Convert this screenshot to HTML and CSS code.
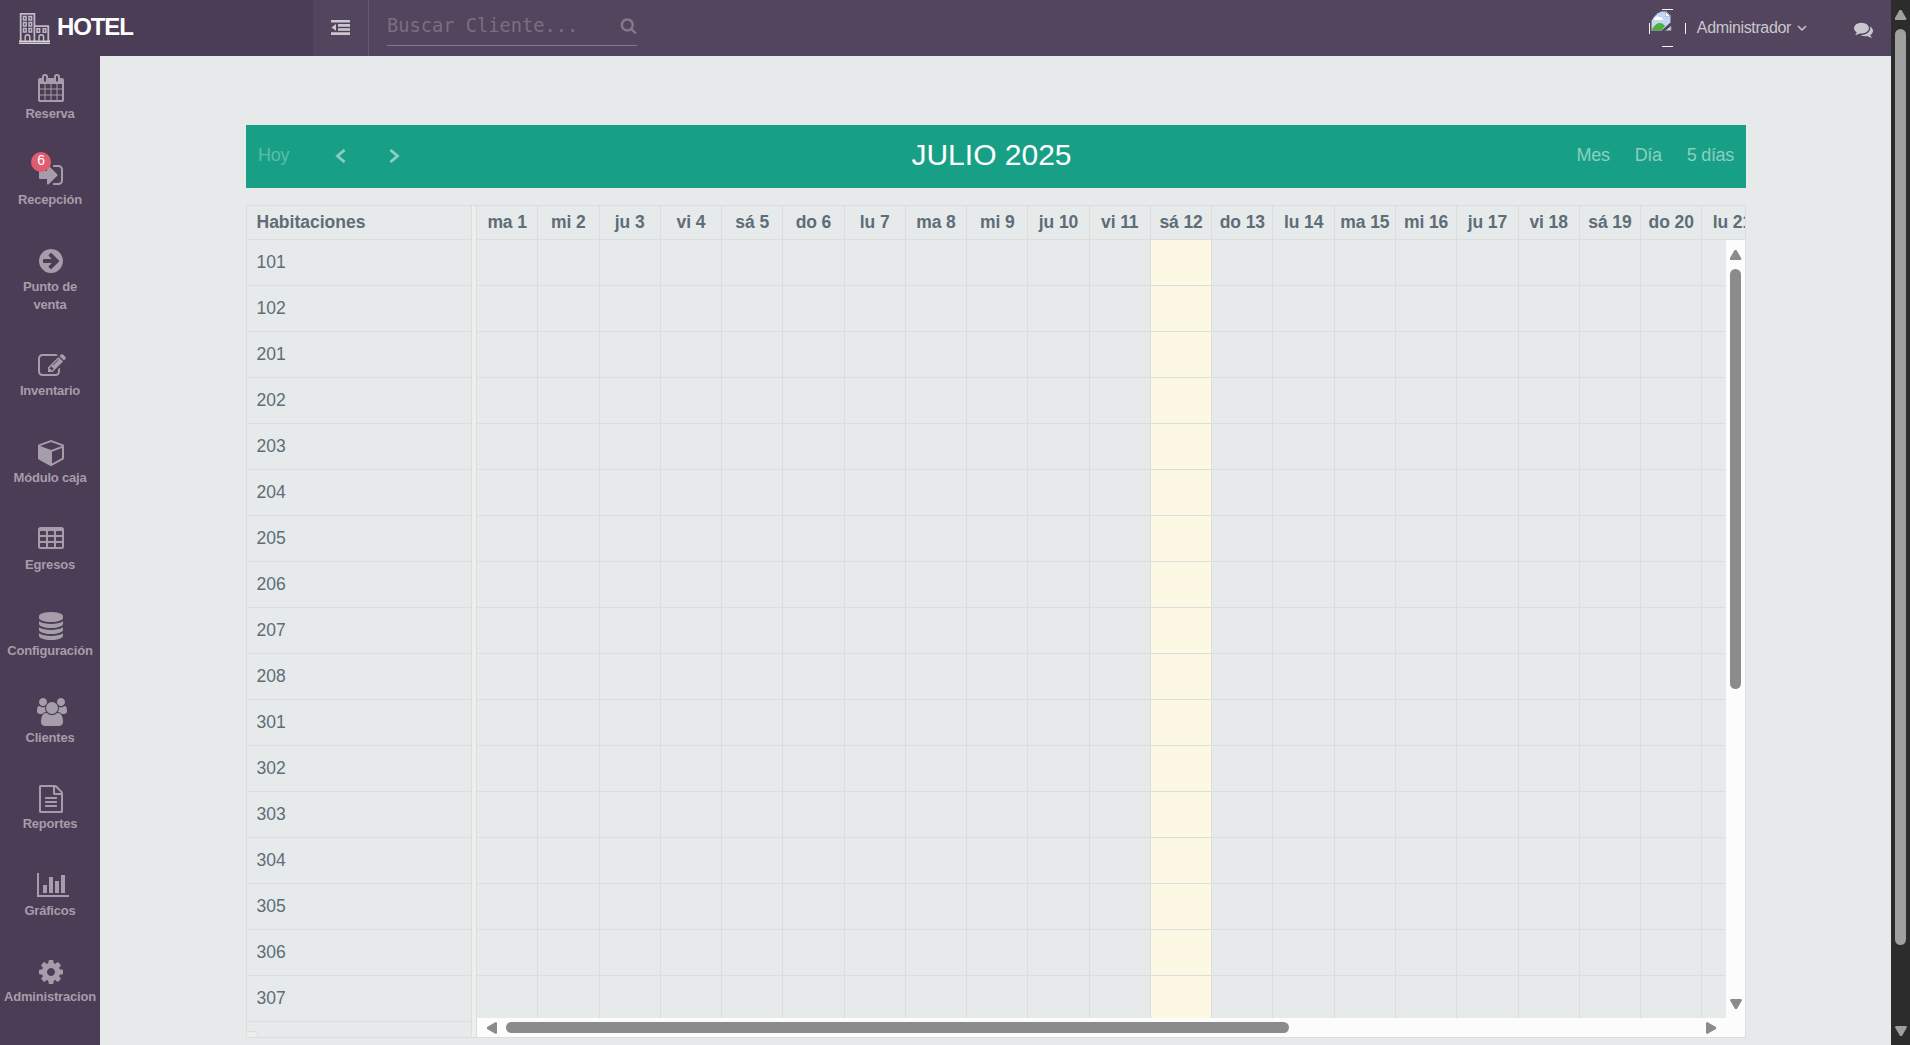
FILE: index.html
```html
<!DOCTYPE html>
<html lang="es">
<head>
<meta charset="utf-8">
<title>Hotel</title>
<link rel="stylesheet" href="styles.css">
</head>
<body>
<header class="topbar">
  <div class="brand">
    <svg class="brand-icon" viewBox="0 0 31 31" fill="none" stroke="#bfb9c6" stroke-width="1.500">
      <path d="M1.700 28V.8H15.400V28M15.400 13.200H29.300V28" stroke-width="1.800"/>
      <path d="M0 28.200H31M0 30.200H31" stroke-width="1.500" stroke="#d8d4dc"/>
      <path d="M4.500 3.500h2.600v3.400H4.500zM10 3.500h2.600v3.400H10zM4.500 9.500h2.600v3.400H4.500zM10 9.500h2.600v3.400H10zM4.500 15.500h2.600v3.400H4.500zM10 15.500h2.600v3.400H10zM18 15.800h2.600v3.400H18zM24.200 15.800h2.600v3.400H24.200zM6.200 28v-4a2.300 2.300 0 0 1 4.600 0v4M20 28v-4a2.300 2.300 0 0 1 4.600 0v4"/>
    </svg>
    <span>HOTEL</span>
  </div>
  <button class="toggle" aria-label="Menu">
    <svg viewBox="0 0 19 15" fill="currentColor"><path d="M0 0h19v2.600H0zM7 4.100h12v2.600H7zM7 8.200h12v2.600H7zM0 12.300h19v2.600H0zM5 3.900v6.900L.4 7.400z"/></svg>
  </button>
  <div class="search">
    <input type="text" placeholder="Buscar Cliente...">
    <svg viewBox="0 0 1792 1792" fill="currentColor"><path d="M1216 832q0-185-131.500-316.500t-316.500-131.500-316.500 131.500-131.500 316.500 131.500 316.500 316.500 131.500 316.500-131.500 131.500-316.500zm512 832q0 52-38 90t-90 38q-54 0-90-38l-343-342q-179 124-399 124-143 0-273.500-55.500t-225-150-150-225-55.500-273.500 55.500-273.500 150-225 225-150 273.500-55.500 273.500 55.500 225 150 150 225 55.500 273.500q0 220-124 399l343 343q37 37 37 90z"/></svg>
  </div>
  <div class="user">
    <svg class="avatar" viewBox="0 0 38 38">
      <defs><clipPath id="round"><circle cx="18.500" cy="19" r="17.500"/></clipPath></defs>
      <g clip-path="url(#round)">
        <path d="M2 2h15l5 5v15H2z" fill="#c3d6f6"/>
        <path d="M5 10q2-4 5-2 4 0 4 3H5z" fill="#fff"/>
        <path d="M2 22q5-9 9-8 3 0 5 3l-4 5z" fill="#4fb035"/>
        <path d="M12 22 22 13v4l-6 5z" fill="#52455d"/>
        <path d="M2.500 22V2.500h14l5 5V14M16.500 2.500v5h5M2 21.500h11M17 21.500h5v-4" fill="none" stroke="#8b8b90"/>
        <path d="M16.500 3v4.500H21z" fill="#fff"/>
      </g>
      <path d="M13 .5h11M13 37.500h11M.5 14v11M36.500 14v11" stroke="#f4f3f5" fill="none"/>
    </svg>
    <span>Administrador</span>
    <svg class="caret" viewBox="0 0 10 7" fill="none" stroke="currentColor" stroke-width="1.500"><path d="M1 1l4 4 4-4"/></svg>
  </div>
  <svg class="chat" viewBox="0 0 1792 1792" fill="currentColor"><path d="M1408 768q0 139-94 257t-256.500 186.500-353.500 68.500q-86 0-176-16-124 88-278 128-36 9-86 16h-3q-11 0-20.500-8t-11.500-21q-1-3-1-6.500t.5-6.500 2-6l2.500-5 3.500-5.500 4-5 4.500-5 4-4.500q5-6 23-25t26-29.500 22.500-29 25-38.500 20.500-44q-124-72-195-177t-71-224q0-139 94-257t256.500-186.500 353.500-68.500 353.500 68.500 256.500 186.500 94 257zm384 256q0 120-71 224.500t-195 176.500q10 24 20.500 44t25 38.500 22.500 29 26 29.500 23 25q1 1 4 4.500t4.500 5 4 5 3.500 5.500l2.500 5 2 6 .5 6.500-1 6.500q-3 14-13 22t-22 7q-50-7-86-16-154-40-278-128-90 16-176 16-271 0-472-132 58 4 88 4 161 0 309-45t264-129q125-92 192-212t67-254q0-77-23-152 129 71 204 178t75 230z"/></svg>
</header>

<div class="body">
  <nav class="sidebar">
    <a class="item"><svg viewBox="0 0 1664 1792"><path d="M128 1664h288v-288h-288v288zm352 0h320v-288h-320v288zm-352-352h288v-320h-288v320zm352 0h320v-320h-320v320zm-352-384h288v-288h-288v288zm736 736h320v-288h-320v288zm-384-736h320v-288h-320v288zm768 736h288v-288h-288v288zm-384-352h320v-320h-320v320zm-352-864v-288q0-13-9.500-22.500t-22.500-9.500h-64q-13 0-22.500 9.500t-9.500 22.500v288q0 13 9.500 22.500t22.500 9.500h64q13 0 22.500-9.500t9.500-22.500zm736 864h288v-320h-288v320zm-384-384h320v-288h-320v288zm384 0h288v-288h-288v288zm32-480v-288q0-13-9.500-22.500t-22.500-9.500h-64q-13 0-22.500 9.500t-9.500 22.500v288q0 13 9.500 22.500t22.500 9.500h64q13 0 22.500-9.500t9.500-22.500zm384-64v1280q0 52-38 90t-90 38h-1408q-52 0-90-38t-38-90v-1280q0-52 38-90t90-38h128v-96q0-66 47-113t113-47h64q66 0 113 47t47 113v96h384v-96q0-66 47-113t113-47h64q66 0 113 47t47 113v96h128q52 0 90 38t38 90z"/></svg><span>Reserva</span></a>
    <a class="item"><svg viewBox="128 0 1536 1792"><path d="M1312 896q0 26-19 45l-544 544q-19 19-45 19t-45-19-19-45v-288h-448q-26 0-45-19t-19-45v-384q0-26 19-45t45-19h448v-288q0-26 19-45t45-19 45 19l544 544q19 19 19 45zm352-352v704q0 119-84.500 203.500t-203.500 84.500h-320q-13 0-22.500-9.500t-9.500-22.500q0-4-1-20t-.5-26.500 3-23.500 10-19.500 20.500-6.500h320q66 0 113-47t47-113v-704q0-66-47-113t-113-47h-312l-11.500-1-11.500-3-8-5.500-7-9-2-13.500q0-4-1-20t-.5-26.500 3-23.500 10-19.500 20.500-6.500h320q119 0 203.500 84.500t84.500 203.500z"/></svg><b class="badge">6</b><span>Recepción</span></a>
    <a class="item"><svg viewBox="128 0 1536 1792"><path d="M1413 896q0-27-18-45l-91-91-362-362q-18-18-45-18t-45 18l-91 91q-18 18-18 45t18 45l189 189h-502q-26 0-45 19t-19 45v128q0 26 19 45t45 19h502l-189 189q-19 19-19 45t19 45l91 91q18 18 45 18t45-18l362-362 91-91q18-18 18-45zm251 0q0 209-103 385.500t-279.500 279.500-385.500 103-385.500-103-279.500-279.500-103-385.500 103-385.500 279.500-279.500 385.500-103 385.500 103 279.500 279.500 103 385.500z"/></svg><span>Punto de<br>venta</span></a>
    <a class="item"><svg viewBox="0 0 1792 1792"><path d="M888 1184l116-116-152-152-116 116v56h96v96h56zm440-720q-16-16-33 1l-350 350q-17 17-1 33t33-1l350-350q17-17 1-33zm80 594v190q0 119-84.500 203.500t-203.500 84.500h-832q-119 0-203.500-84.500t-84.500-203.500v-832q0-119 84.500-203.500t203.500-84.500h832q63 0 117 25 15 7 18 23 3 17-9 29l-49 49q-14 14-32 8-23-6-45-6h-832q-66 0-113 47t-47 113v832q0 66 47 113t113 47h832q66 0 113-47t47-113v-126q0-13 9-22l64-64q15-15 35-7t20 29zm-96-738l288 288-672 672h-288v-288zm444 132l-92 92-288-288 92-92q28-28 68-28t68 28l152 152q28 28 28 68t-28 68z"/></svg><span>Inventario</span></a>
    <a class="item"><svg viewBox="0 0 1664 1792"><path d="M896 1629l640-349v-636l-640 233v752zm-64-865l698-254-698-254-698 254zm832-252v768q0 35-18 65t-49 47l-704 384q-28 16-61 16t-61-16l-704-384q-31-17-49-47t-18-65v-768q0-40 23-73t61-47l704-256q22-8 44-8t44 8l704 256q38 14 61 47t23 73z"/></svg><span>Módulo caja</span></a>
    <a class="item"><svg viewBox="0 0 1664 1792"><path fill-rule="evenodd" d="M160 128h1344q160 0 160 160v1088q0 160-160 160h-1344q-160 0-160-160v-1088q0-160 160-160zM128 416v192q0 32 32 32h320q32 0 32-32v-192q0-32-32-32h-320q-32 0-32 32zm512 0v192q0 32 32 32h320q32 0 32-32v-192q0-32-32-32h-320q-32 0-32 32zm512 0v192q0 32 32 32h320q32 0 32-32v-192q0-32-32-32h-320q-32 0-32 32zM128 800v192q0 32 32 32h320q32 0 32-32v-192q0-32-32-32h-320q-32 0-32 32zm512 0v192q0 32 32 32h320q32 0 32-32v-192q0-32-32-32h-320q-32 0-32 32zm512 0v192q0 32 32 32h320q32 0 32-32v-192q0-32-32-32h-320q-32 0-32 32zM128 1184v192q0 32 32 32h320q32 0 32-32v-192q0-32-32-32h-320q-32 0-32 32zm512 0v192q0 32 32 32h320q32 0 32-32v-192q0-32-32-32h-320q-32 0-32 32zm512 0v192q0 32 32 32h320q32 0 32-32v-192q0-32-32-32h-320q-32 0-32 32z"/></svg><span>Egresos</span></a>
    <a class="item"><svg viewBox="128 0 1536 1792"><path d="M896 768q237 0 443-43t325-127v170q0 69-103 128t-280 93.500-385 34.500-385-34.500-280-93.500-103-128v-170q119 84 325 127t443 43zm0 768q237 0 443-43t325-127v170q0 69-103 128t-280 93.500-385 34.500-385-34.500-280-93.500-103-128v-170q119 84 325 127t443 43zm0-384q237 0 443-43t325-127v170q0 69-103 128t-280 93.500-385 34.500-385-34.500-280-93.500-103-128v-170q119 84 325 127t443 43zm0-1152q208 0 385 34.500t280 93.500 103 128v128q0 69-103 128t-280 93.500-385 34.500-385-34.500-280-93.500-103-128v-128q0-69 103-128t280-93.500 385-34.500z"/></svg><span>Configuración</span></a>
    <a class="item"><svg viewBox="0 0 1920 1792"><path d="M593 896q-162 5-265 128h-134q-82 0-138-40.500t-56-118.500q0-353 124-353 6 0 43.500 21t97.500 42.500 119 21.500q67 0 133-23-5 37-5 66 0 159 81 256zm1071 637q0 120-73 189.500t-194 69.500h-874q-121 0-194-69.500t-73-189.500q0-53 3.500-103.500t14-109 26.500-108.500 43-97.500 62-81 85.500-53.500 111.500-20q10 0 43 21.500t73 48 107 48 135 21.500 135-21.500 107-48 73-48 43-21.500q61 0 111.500 20t85.500 53.500 62 81 43 97.500 26.500 108.500 14 109 3.500 103.500zm-1024-1277q0 106-75 181t-181 75-181-75-75-181 75-181 181-75 181 75 75 181zm704 384q0 159-112.500 271.500t-271.500 112.500-271.500-112.500-112.500-271.500 112.500-271.500 271.500-112.500 271.500 112.500 112.500 271.500zm576 225q0 78-56 118.500t-138 40.500h-134q-103-123-265-128 81-97 81-256 0-29-5-66 66 23 133 23 59 0 119-21.500t97.500-42.500 43.500-21q124 0 124 353zm-128-609q0 106-75 181t-181 75-181-75-75-181 75-181 181-75 181 75 75 181z"/></svg><span>Clientes</span></a>
    <a class="item"><svg viewBox="128 0 1536 1792"><path d="M1596 380q28 28 48 76t20 88v1152q0 40-28 68t-68 28h-1344q-40 0-68-28t-28-68v-1600q0-40 28-68t68-28h896q40 0 88 20t76 48zm-444-244v376h376q-10-29-22-41l-313-313q-12-12-41-22zm384 1528v-1024h-416q-40 0-68-28t-28-68v-416h-768v1536h1280zm-1024-864q0-14 9-23t23-9h704q14 0 23 9t9 23v64q0 14-9 23t-23 9h-704q-14 0-23-9t-9-23v-64zm736 224q14 0 23 9t9 23v64q0 14-9 23t-23 9h-704q-14 0-23-9t-9-23v-64q0-14 9-23t23-9h704zm0 256q14 0 23 9t9 23v64q0 14-9 23t-23 9h-704q-14 0-23-9t-9-23v-64q0-14 9-23t23-9h704z"/></svg><span>Reportes</span></a>
    <a class="item"><svg viewBox="0 0 2048 1792"><path d="M640 896v512h-256v-512h256zm384-512v1024h-256v-1024h256zm1024 1152v128h-2048v-1536h128v1408h1920zm-640-896v768h-256v-768h256zm384-384v1152h-256v-1152h256z"/></svg><span>Gráficos</span></a>
    <a class="item"><svg viewBox="128 0 1536 1792"><path d="M1152 896q0-106-75-181t-181-75-181 75-75 181 75 181 181 75 181-75 75-181zm512-109v222q0 12-8 23t-20 13l-185 28q-19 54-39 91 35 50 107 138 10 12 10 25t-9 23q-27 37-99 108t-94 71q-12 0-26-9l-138-108q-44 23-91 38-16 136-29 186-7 28-36 28h-222q-14 0-24.500-8.500t-11.500-21.500l-28-184q-49-16-90-37l-141 107q-10 9-25 9-14 0-25-11-126-114-165-168-7-10-7-23 0-12 8-23 15-21 51-66.500t54-70.500q-27-50-41-99l-183-27q-13-2-21-12.500t-8-23.500v-222q0-12 8-23t19-13l186-28q14-46 39-92-40-57-107-138-10-12-10-24 0-10 9-23 26-36 98.500-107.500t94.500-71.500q13 0 26 10l138 107q44-23 91-38 16-136 29-186 7-28 36-28h222q14 0 24.500 8.500t11.500 21.500l28 184q49 16 90 37l142-107q9-9 24-9 13 0 25 10 129 119 165 170 7 8 7 22 0 12-8 23-15 21-51 66.500t-54 70.500q26 50 41 98l183 28q13 2 21 12.500t8 23.500z"/></svg><span>Administracion</span></a>
  </nav>

  <main class="content">
    <div class="cal-bar">
      <div class="cal-left">
        <span class="today-btn">Hoy</span>
        <svg class="arrow" viewBox="0 0 11 14"><path d="M9.500 1L2.500 7l7 6"/></svg>
        <svg class="arrow" viewBox="0 0 11 14"><path d="M1.500 1l7 6-7 6"/></svg>
      </div>
      <h2>JULIO 2025</h2>
      <div class="cal-right"><span>Mes</span><span>Día</span><span>5 días</span></div>
    </div>
    <div class="grid">
      <div class="rooms" id="rooms"><div class="cell head">Habitaciones</div></div>
      <div class="divider"></div>
      <div class="timeline">
        <div class="days" id="days"></div>
        <div class="slots">
          <div class="lanes" id="lanes"></div>
          <div class="scroll vertical"><i class="tri up"></i><i class="thumb"></i><i class="tri down"></i></div>
        </div>
        <div class="scroll horizontal"><i class="tri left"></i><i class="thumb"></i><i class="tri right"></i></div>
      </div>
    </div>
  </main>
</div>
<aside class="scroll page-scroll"><i class="tri up"></i><i class="thumb"></i><i class="tri down"></i></aside>
<script src="calendar.js"></script>
</body>
</html>
```
FILE: calendar.js
```js
const rooms = [101, 102, 201, 202, 203, 204, 205, 206, 207, 208, 301, 302, 303, 304, 305, 306, 307];
const names = ['lu', 'ma', 'mi', 'ju', 'vi', 'sá', 'do'];
const today = 12;

const add = (parent, cls, text) => {
  const el = document.createElement('div');
  el.className = cls;
  el.textContent = text || '';
  parent.appendChild(el);
};

const roomList = document.getElementById('rooms');
rooms.forEach(r => add(roomList, 'cell', String(r)));
add(roomList, 'corner');

const days = document.getElementById('days');
const lanes = document.getElementById('lanes');
for (let d = 1; d <= 21; d++) {
  add(days, 'day', names[d % 7] + ' ' + d);
  add(lanes, d === today ? 'lane today' : 'lane');
}
```
FILE: styles.css
```css
* { box-sizing: border-box; }
html, body { margin: 0; height: 100%; overflow: hidden; }
body {
  display: grid;
  grid-template: 56px 989px / 1891px 19px;
  background: #e6eaeb;
  font-family: "Liberation Sans", Arial, sans-serif;
  color: #5e6d77;
}
.topbar { display: flex; align-items: center; background: #52455d; color: #cbc7ce; }
.brand {
  width: 313px; height: 56px; padding: 0 0 2px 19px;
  display: flex; align-items: center; gap: 7px;
  background: #4a3d55; color: #fff; font-size: 24px; font-weight: bold;
}
.brand-icon { width: 31px; height: 31px; margin-top: 3px; }
.brand span { letter-spacing: -1.100px; }
.toggle {
  width: 56px; height: 56px; padding: 2px 0 0; border: 0; border-right: 1px solid #65596f;
  background: none; color: #cbc7ce;
}
.toggle svg { width: 19px; height: 15px; }
.search {
  width: 250px; height: 46px; margin: 0 0 10px 18px;
  display: flex; align-items: center; justify-content: space-between;
  border-bottom: 1px solid #83798b; color: #83798b;
}
.search input {
  width: 210px; padding: 0; margin-top: 6px; border: 0; outline: 0; background: none;
  font: 18.700px "DejaVu Sans Mono", monospace;
}
.search input::placeholder { color: #7a6f82; opacity: 1; }
.search svg { width: 17px; height: 17px; margin-top: 6px; }
.user { display: flex; align-items: center; margin-left: auto; font-size: 16px; letter-spacing: -.35px; }
.avatar { width: 38px; height: 38px; margin-right: 10px; }
.caret { width: 10px; height: 7px; margin-left: 6px; }
.chat { width: 19px; height: 19px; margin: 3px 18px 0 47px; }

.body { grid-area: 2 / 1; display: flex; }
.sidebar { width: 100px; padding-top: 18px; background: #4a3d55; color: #a59eaa; }
.item {
  position: relative; display: flex; flex-direction: column; align-items: center;
  padding-bottom: 37.900px;
  font-size: 13px; font-weight: bold; line-height: 18.100px; text-align: center; white-space: nowrap;
  letter-spacing: -.2px;
}
.item svg { height: 28px; margin: 0 0 2.600px 1px; fill: currentColor; display: block; }
.item:nth-child(8) svg, .item:nth-child(4) svg { margin-left: 4px; }
.item:nth-child(10) svg { margin-left: 6px; }
.badge {
  position: absolute; left: 31px; top: -9px; width: 20px; height: 20px; border-radius: 50%;
  background: #e05d6f; color: #fff; font-size: 14px; font-weight: normal; line-height: 17px;
}

.content { width: 1791px; padding: 69px 145px 0 146px; }
.cal-bar {
  height: 63px; padding: 0 12px; display: grid; grid-template-columns: 1fr auto 1fr; align-items: center;
  background: #18a086; color: #8bcfc2; font-size: 18px; letter-spacing: -.3px;
}
.cal-bar h2 { margin: 0 9px 4px 0; font-size: 30px; font-weight: normal; color: #fff; letter-spacing: 0; }
.cal-left { display: flex; align-items: center; padding-bottom: 2px; }
.today-btn { color: #5dbcaa; margin-right: 46px; }
.arrow { width: 11px; height: 14px; margin-right: 43px; fill: none; stroke: #8bcfc2; stroke-width: 2.800; }
.cal-right { display: flex; justify-content: flex-end; gap: 25px; padding-bottom: 2px; }

.grid {
  margin-top: 17px; height: 833px; display: grid; grid-template-columns: 225px 4px 1fr;
  border: 1px solid #dcdddd; overflow: hidden; font-size: 17.500px;
}
.rooms { display: flex; flex-direction: column; border-right: 1px solid #dcdddd; }
.cell { height: 46px; padding: 0 9.500px; line-height: 44px; border-bottom: 1px solid #dcdddd; }
.cell.head { height: 34px; line-height: 32px; font-weight: bold; }
.corner { width: 11px; height: 6px; margin-top: auto; background: #efeded; border: 1px solid #dcdddd; border-width: 1px 1px 0 0; border-radius: 0 3px 0 0; }
.divider { background: #efeded; }
.timeline { min-width: 0; border-left: 1px solid #dcdddd; display: flex; flex-direction: column; overflow: hidden; }
.days, .lanes { display: flex; overflow: hidden; }
.days { height: 34px; border-bottom: 1px solid #dcdddd; letter-spacing: -.1px; }
.day, .lane { flex: 0 0 61.280px; border-right: 1px solid #dcdddd; }
.day { line-height: 32px; text-align: center; font-weight: bold; white-space: nowrap; }
.slots { flex: 1; display: flex; min-height: 0; }
.lanes { flex: 1; min-width: 0; }
.lane { background-image: repeating-linear-gradient(to bottom, transparent 0 45px, #dcdddd 45px 46px); }
.lane.today { background-color: #fcf8e3; }

.scroll { display: flex; align-items: center; background: #fcfcfc; color: #8b8b8b; }
.thumb { background: currentColor; border-radius: 6px; }
.tri { width: 12px; height: 10px; background: currentColor; clip-path: polygon(42% 0, 58% 0, 100% 88%, 94% 100%, 6% 100%, 0 88%); }
.down { transform: rotate(180deg); }
.left { transform: rotate(-90deg); }
.right { transform: rotate(90deg); }
.vertical { width: 19px; flex-direction: column; padding: 10px 0 9px; }
.vertical .thumb { width: 11px; height: 420px; margin: 9px 0 auto; }
.horizontal { height: 19px; padding: 0 28px 0 9px; }
.horizontal .thumb { height: 11px; width: 783px; margin: 0 auto 0 8px; }
.page-scroll { grid-area: 1 / 2 / 3 / 3; flex-direction: column; padding: 10px 0 9px; background: #2c2c2c; color: #9f9f9f; }
.page-scroll .thumb { width: 11px; height: 916px; margin: 9px 0 auto; }
```
